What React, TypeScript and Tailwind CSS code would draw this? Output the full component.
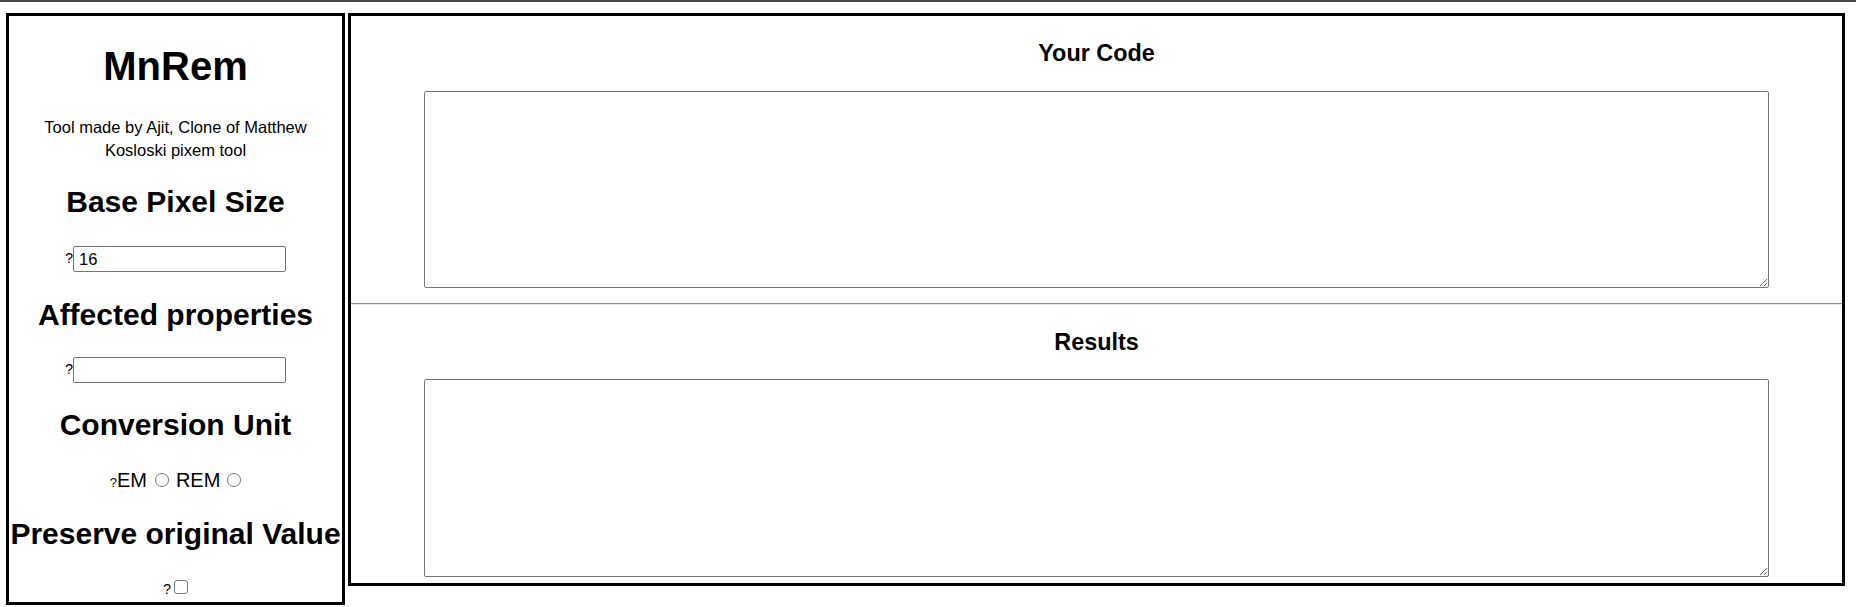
import React from "react";

const font = { fontFamily: '"Liberation Sans", Arial, sans-serif' };

function Radio() {
  return (
    <input
      type="radio"
      name="unit"
      className="appearance-none w-[14px] h-[14px] rounded-full border border-[#767676] bg-white m-0"
    />
  );
}

export default function App() {
  return (
    <div className="w-[1856px] h-[607px] bg-white text-black" style={font}>
      <div className="h-[2px] bg-[#4a4a4a]" />
      <div className="flex items-start gap-[3px] pt-[11px] pl-[6px]">
        {/* Left panel */}
        <div className="w-[339px] border-[3px] border-black flex flex-col items-center pb-[5px]">
          <h1 className="mt-[27px] h-[46px] leading-[46px] text-[40px] font-bold">MnRem</h1>
          <p className="mt-[27px] w-[285px] text-center text-[16.5px] leading-[23px]">
            Tool made by Ajit, Clone of Matthew Kosloski pixem tool
          </p>
          <h2 className="mt-[23px] h-[34px] leading-[34px] text-[30px] font-bold whitespace-nowrap">
            Base Pixel Size
          </h2>
          <div className="mt-[27px] flex items-end h-[26px]">
            <span className="text-[14.5px] leading-[16px] mb-[6px]">?</span>
            <input
              type="text"
              defaultValue="16"
              className="w-[213px] h-[26px] border border-[#767676] rounded-[2px] pl-[5px] text-[16.5px] outline-none"
              style={font}
            />
          </div>
          <h2 className="mt-[26px] h-[34px] leading-[34px] text-[30px] font-bold whitespace-nowrap">
            Affected properties
          </h2>
          <div className="mt-[25px] flex items-end h-[26px]">
            <span className="text-[14.5px] leading-[16px] mb-[6px]">?</span>
            <input
              type="text"
              className="w-[213px] h-[26px] border border-[#767676] rounded-[2px] pl-[5px] text-[16.5px] outline-none"
              style={font}
            />
          </div>
          <h2 className="mt-[25px] h-[34px] leading-[34px] text-[30px] font-bold whitespace-nowrap">
            Conversion Unit
          </h2>
          <div className="mt-[28px] flex items-baseline leading-[20px]">
            <span className="text-[13px]">?</span>
            <span className="text-[20px] mr-[8px]">EM</span>
            <Radio />
            <span className="text-[20px] ml-[7px] mr-[7px]">REM</span>
            <Radio />
          </div>
          <h2 className="mt-[24px] h-[34px] leading-[34px] text-[30px] font-bold whitespace-nowrap">
            Preserve original Value
          </h2>
          <div className="mt-[29px] flex items-baseline leading-[16px]">
            <span className="text-[14.5px] mr-[3px]">?</span>
            <input
              type="checkbox"
              className="appearance-none w-[14px] h-[14px] rounded-[3px] border border-[#767676] bg-white m-0"
            />
          </div>
        </div>

        {/* Right panel */}
        <div className="w-[1497px] border-[3px] border-black flex flex-col pb-[6px]">
          <h3 className="mt-[24px] h-[27px] leading-[27px] text-[23.4px] font-bold text-center">Your Code</h3>
          <textarea
            className="mt-[24px] mx-auto block w-[1345px] h-[197px] border border-[#767676] rounded-[2px] outline-none"
            style={font}
          />
          <div className="mt-[15px] h-0 border-t border-t-[#8c8c8c] border-b border-b-[#e8e8e8]" />
          <h3 className="mt-[24px] h-[27px] leading-[27px] text-[23.4px] font-bold text-center">Results</h3>
          <textarea
            className="mt-[23px] mx-auto block w-[1345px] h-[198px] border border-[#767676] rounded-[2px] outline-none"
            style={font}
          />
        </div>
      </div>
    </div>
  );
}
